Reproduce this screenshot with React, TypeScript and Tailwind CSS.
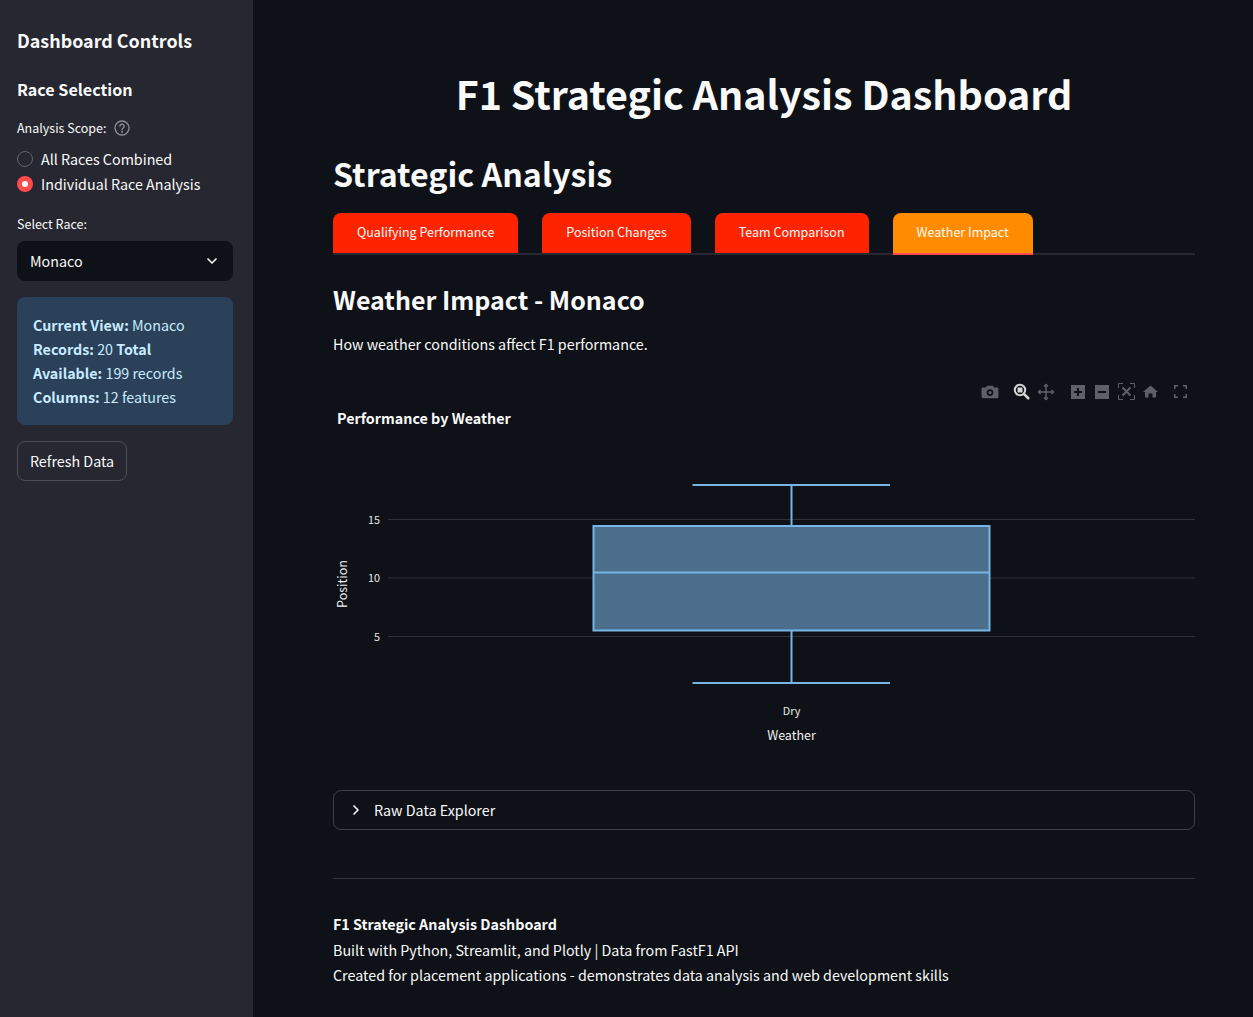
import { ChevronDown, ChevronRight } from 'lucide-react';

const tabs = [
  { title: 'Qualifying Performance', active: false },
  { title: 'Position Changes', active: false },
  { title: 'Team Comparison', active: false },
  { title: 'Weather Impact', active: true },
];

const grid = [
  { y: 139.5, label: '15' },
  { y: 198, label: '10' },
  { y: 256.5, label: '5' },
];

function Modebar() {
  return (
    <div className="absolute right-0 top-0 flex h-6 w-[224px] items-center text-[#5e6065]">
      <svg className="absolute left-[10px] top-[3px]" width="18" height="18" viewBox="0 0 16 16" fill="currentColor">
        <path fillRule="evenodd" d="M1.500 4h3l1-1.500h5l1 1.500h3a1 1 0 0 1 1 1v7.500a1 1 0 0 1-1 1h-13a1 1 0 0 1-1-1V5a1 1 0 0 1 1-1zM8 5.500a3 3 0 1 0 0 6 3 3 0 0 0 0-6zM8 7a1.500 1.500 0 1 1 0 3 1.500 1.500 0 0 1 0-3z" />
      </svg>
      <svg className="absolute left-[42px] top-[3px]" width="18" height="18" viewBox="0 0 18 18" fill="none">
        <circle cx="7" cy="7" r="5.200" stroke="#d4d5d6" strokeWidth="2" />
        <rect x="4.500" y="4.500" width="5" height="5" fill="#d4d5d6" />
        <path d="M11 11l5 5" stroke="#d4d5d6" strokeWidth="2.500" />
      </svg>
      <svg className="absolute left-[66px] top-[3px]" width="18" height="18" viewBox="0 0 18 18" fill="none" stroke="currentColor" strokeWidth="1.500">
        <path d="M9 1.500v15M1.500 9h15" />
        <path d="M7 3.500l2-2 2 2M7 14.500l2 2 2-2M3.500 7l-2 2 2 2M14.500 7l2 2-2 2" />
      </svg>
      <svg className="absolute left-[100px] top-[5px]" width="14" height="14" viewBox="0 0 14 14" fill="currentColor">
        <path fillRule="evenodd" d="M0 0h14v14H0zM6 3v3H3v2h3v3h2V8h3V6H8V3z" />
      </svg>
      <svg className="absolute left-[124px] top-[5px]" width="14" height="14" viewBox="0 0 14 14" fill="currentColor">
        <path fillRule="evenodd" d="M0 0h14v14H0zM3 6v2h8V6z" />
      </svg>
      <svg className="absolute left-[147px] top-[3px]" width="17" height="17" viewBox="0 0 17 17" fill="none" stroke="currentColor">
        <path d="M5 .5H.5V5M12 .5h4.500V5M5 16.500H.5V12M12 16.500h4.500V12" />
        <path d="M4.500 4.500l8 8M12.500 4.500l-8 8" strokeWidth="2" />
      </svg>
      <svg className="absolute left-[172px] top-[4px]" width="15" height="15" viewBox="0 0 15 15" fill="currentColor">
        <path d="M7.500 1.500L15 8h-2v5.500H9.500V9.500h-4v4H2V8H0z" />
      </svg>
      <svg className="absolute left-[203px] top-[5px]" width="13" height="13" viewBox="0 0 13 13" fill="none" stroke="currentColor" strokeWidth="1.500">
        <path d="M4 .75H.75V4M9 .75h3.250V4M4 12.250H.75V9M9 12.250h3.250V9" />
      </svg>
    </div>
  );
}

function WeatherChart() {
  return (
    <div className="relative mt-[24px] h-[380px]">
      <Modebar />
      <svg width="862" height="380" viewBox="0 0 862 380" className="block">
        <text x="4" y="44" fill="#fafafa" fontSize="14.300" fontWeight="700" fontFamily='"Noto Sans CJK SC", sans-serif'>Performance by Weather</text>
        {grid.map((g) => (
          <g key={g.label}>
            <line x1="55" x2="862" y1={g.y} y2={g.y} stroke="#2f3238" />
            <text x="47" y={g.y + 4} textAnchor="end" fill="#e8e8e8" fontSize="10.800" fontFamily='"Noto Sans CJK SC", sans-serif'>{g.label}</text>
          </g>
        ))}
        <g stroke="#77b5e6" strokeWidth="2" fill="none">
          <rect x="260.500" y="146" width="396" height="104.500" fill="#4a6e8c" />
          <path d="M260.500 192.500h396" />
          <path d="M458.500 146v-41M359.500 105h197.500M458.500 250.500v52.500M359.500 303h197.500" />
        </g>
        <text x="458.500" y="335" textAnchor="middle" fill="#e8e8e8" fontSize="10.800" fontFamily='"Noto Sans CJK SC", sans-serif'>Dry</text>
        <text x="458.500" y="360" textAnchor="middle" fill="#f0f0f0" fontSize="12.500" fontFamily='"Noto Sans CJK SC", sans-serif'>Weather</text>
        <text transform="translate(14 204) rotate(-90)" textAnchor="middle" fill="#f0f0f0" fontSize="12.500" fontFamily='"Noto Sans CJK SC", sans-serif'>Position</text>
      </svg>
    </div>
  );
}

function Sidebar() {
  return (
    <aside className="flex w-[253px] shrink-0 flex-col bg-[#262730] pt-[25px] pr-5 pl-[17px] text-[14.300px]">
      <h2 className="text-[17.900px] leading-[30px] font-semibold">Dashboard Controls</h2>
      <h3 className="mt-[21px] text-[16.100px] leading-[27px] font-semibold">Race Selection</h3>

      <div className="mt-[14px] flex h-[22px] items-center gap-[7px] text-[12.500px]">
        <span>Analysis Scope:</span>
        <svg width="16" height="16" viewBox="0 0 16 16" fill="none" stroke="#8e8f94" strokeWidth="1.300">
          <circle cx="8" cy="8" r="7" />
          <path d="M5.900 6.200a2.100 2.100 0 1 1 3.200 1.800c-.7.400-1.100.9-1.100 1.700" strokeLinecap="round" />
          <circle cx="8" cy="11.800" r=".4" fill="#8e8f94" />
        </svg>
      </div>
      <div className="mt-[8px] flex h-[24px] items-center gap-2">
        <span className="size-4 rounded-full border border-[#64656b]" />
        <span>All Races Combined</span>
      </div>
      <div className="mt-[1px] flex h-[24px] items-center gap-2">
        <span className="flex size-4 items-center justify-center rounded-full bg-[#ff4b4b]">
          <span className="size-[6px] rounded-full bg-white" />
        </span>
        <span>Individual Race Analysis</span>
      </div>

      <div className="mt-[17px] text-[12.500px] leading-[22px]">Select Race:</div>
      <div className="mt-[6px] flex h-10 items-center justify-between rounded-lg bg-[#0e1117] px-[13px]">
        <span>Monaco</span>
        <ChevronDown size={16} strokeWidth={2.500} />
      </div>

      <div className="mt-4 rounded-lg bg-[#2b4059] p-4 leading-6 text-[#c7ebff]">
        <div><b className="font-semibold">Current View:</b> Monaco</div>
        <div><b className="font-semibold">Records:</b> 20 <b className="font-semibold">Total</b></div>
        <div><b className="font-semibold">Available:</b> 199 records</div>
        <div><b className="font-semibold">Columns:</b> 12 features</div>
      </div>

      <button className="mt-4 h-10 w-[110px] rounded-lg border border-[#4d4e55] bg-[#262730]">Refresh Data</button>
    </aside>
  );
}

export default function App() {
  return (
    <div
      className="flex h-[1017px] overflow-hidden bg-[#0e1117] text-[#fafafa]"
      style={{ fontFamily: '"Noto Sans CJK SC", "Noto Sans", sans-serif' }}
    >
      <Sidebar />
      <main className="min-w-0 flex-1 pt-[60px] pr-[58px] pl-20 text-[14.300px]">
        <h1 className="text-center text-[39.400px] leading-[66px] font-bold">F1 Strategic Analysis Dashboard</h1>
        <h2 className="mt-5 text-[32.200px] leading-[54px] font-semibold">Strategic Analysis</h2>

        <div className="mt-[13px] flex gap-6 border-b-2 border-[#262730]">
          {tabs.map((tab) => (
            <div
              key={tab.title}
              className={`-mb-[2px] flex h-[42px] items-center rounded-t-lg border-b-2 px-6 pb-[2px] text-[12.500px] ${
                tab.active ? 'border-[#ff4b4b] bg-[#ff8c00]' : 'border-[#262730] bg-[#ff2400]'
              }`}
            >
              {tab.title}
            </div>
          ))}
        </div>

        <h3 className="mt-[23px] text-[25px] leading-[42px] font-semibold">Weather Impact - Monaco</h3>
        <p className="mt-3 leading-6">How weather conditions affect F1 performance.</p>

        <WeatherChart />

        <div className="mt-[30px] flex h-10 items-center gap-[10px] rounded-lg border border-[#3d3f45] pl-[14px]">
          <ChevronRight size={16} strokeWidth={2.500} />
          <span>Raw Data Explorer</span>
        </div>

        <hr className="mt-12 border-[#2f3238]" />

        <div className="mt-8 leading-[25.600px]">
          <div className="font-semibold">F1 Strategic Analysis Dashboard</div>
          <div>Built with Python, Streamlit, and Plotly | Data from FastF1 API</div>
          <div>Created for placement applications - demonstrates data analysis and web development skills</div>
        </div>
      </main>
    </div>
  );
}
